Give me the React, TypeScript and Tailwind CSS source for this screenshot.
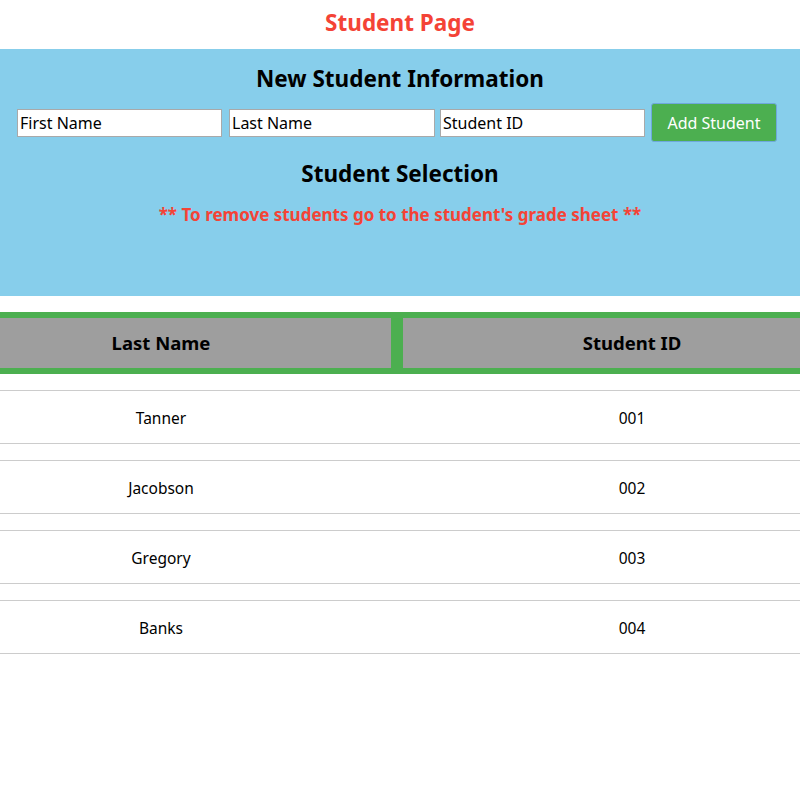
const students = [
  { last: 'Tanner', id: '001' },
  { last: 'Jacobson', id: '002' },
  { last: 'Gregory', id: '003' },
  { last: 'Banks', id: '004' },
]

export default function App() {
  return (
    <div className="min-h-[800px] w-[800px] overflow-hidden bg-white font-['Noto_Sans',sans-serif] text-black">
      {/* Title */}
      <h1 className="h-[49px] pt-[6px] text-center text-[22.5px] font-bold text-[#f44336]">Student Page</h1>

      {/* New student form */}
      <section className="h-[247px] bg-[#87ceeb] pt-[13px]">
        <h2 className="text-center text-[22.5px] font-bold leading-[34px]">New Student Information</h2>
        <div className="mt-[7px] flex items-center pl-[17px]">
          <input
            placeholder="First Name"
            className="h-[28px] w-[205px] border border-[#a9a9a9] bg-white px-[2px] text-[16px] placeholder:text-black"
          />
          <input
            placeholder="Last Name"
            className="ml-[7px] h-[28px] w-[206px] border border-[#a9a9a9] bg-white px-[2px] text-[16px] placeholder:text-black"
          />
          <input
            placeholder="Student ID"
            className="ml-[5px] h-[28px] w-[205px] border border-[#a9a9a9] bg-white px-[2px] text-[16px] placeholder:text-black"
          />
          <button className="ml-[6px] h-[39px] w-[126px] rounded-[3px] border border-[#6fa8dc] bg-[#4caf50] text-[16px] text-white">
            Add Student
          </button>
        </div>
        <h2 className="mt-[16px] text-center text-[22.5px] font-bold leading-[32px]">Student Selection</h2>
        <p className="mt-[12px] text-center text-[17px] font-bold text-[#f44336]">
          ** To remove students go to the student's grade sheet **
        </p>
      </section>

      {/* Student table */}
      <div className="mt-[16px] bg-[#4caf50] py-[6px]">
        <div className="ml-[-69px] grid w-[930px] grid-cols-[460px_458px] gap-x-[12px]">
          <div className="flex h-[50px] items-center justify-center bg-[#9e9e9e] text-[18.5px] font-bold">Last Name</div>
          <div className="flex h-[50px] items-center justify-center bg-[#9e9e9e] text-[18.5px] font-bold">Student ID</div>
        </div>
      </div>

      <div className="pt-[16px]">
        {students.map((s) => (
          <div key={s.id} className="mb-[16px] border-y border-[#cccccc]">
            <div className="ml-[-69px] grid h-[52px] w-[930px] grid-cols-[460px_458px] items-center gap-x-[12px] pt-[3px] text-[15.5px]">
              <div className="text-center">{s.last}</div>
              <div className="text-center">{s.id}</div>
            </div>
          </div>
        ))}
      </div>
    </div>
  )
}
